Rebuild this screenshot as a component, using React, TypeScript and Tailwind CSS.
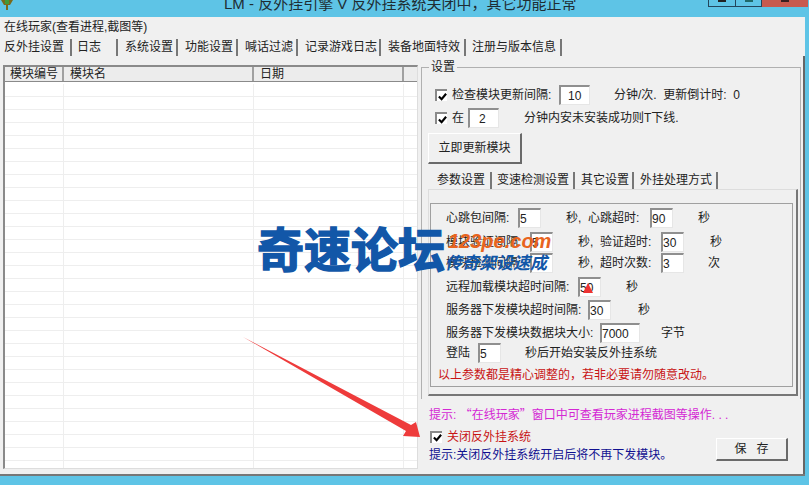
import React from 'react';

const FONT = "font-['Liberation_Sans','Noto_Sans_CJK_SC',sans-serif]";

function Field({ value, width, pl = 'pl-0' }: { value: string; width: string; pl?: string }) {
	return (
		<span className={`inline-block h-[20px] shrink-0 border-t-2 border-l-2 border-t-[#8f8f8f] border-l-[#8f8f8f] border-r border-b border-r-[#e6e6e6] border-b-[#e6e6e6] bg-white text-[12px] leading-[18px] ${width} ${pl}`}>
			{value}
		</span>
	);
}

function Check() {
	return (
		<span className="flex h-[12px] w-[12px] shrink-0 items-center justify-center border-t-2 border-l-2 border-t-[#8a8a8a] border-l-[#8a8a8a] bg-white">
			<svg viewBox="0 0 10 10" className="h-[9px] w-[9px]">
				<path d="M1 5l3 3 5-6" fill="none" stroke="#000" strokeWidth="2.4" />
			</svg>
		</span>
	);
}

function TabLabel({ label, width }: { label: string; width: string }) {
	return (
		<span className={`block h-[17px] shrink-0 border-r-2 border-r-[#777] text-[12px] leading-[17px] whitespace-nowrap text-[#222] ${width}`}>{label}</span>
	);
}

const mainTabs = [
	{ label: '日志', width: 'w-[46px] pl-[5px]' },
	{ label: '系统设置', width: 'w-[60px] pl-[7px]' },
	{ label: '功能设置', width: 'w-[60px] pl-[7px]' },
	{ label: '喊话过滤', width: 'w-[60px] pl-[7px]' },
	{ label: '记录游戏日志', width: 'w-[83px] pl-[7px]' },
	{ label: '装备地面特效', width: 'w-[85px] pl-[7px]' },
	{ label: '注册与版本信息', width: 'w-[96px] pl-[6px]' },
];

const subTabs = [
	{ label: '变速检测设置', width: 'w-[83px] pl-[5px]' },
	{ label: '其它设置', width: 'w-[59px] pl-[6px]' },
	{ label: '外挂处理方式', width: 'w-[84px] pl-[6px]' },
];

export default function App() {
	return (
		<div className={`relative flex h-[485px] w-[809px] flex-col overflow-hidden bg-[#5ec4e6] text-[#222] ${FONT}`}>
			{/* title bar */}
			<div className="flex h-[17px] shrink-0 items-end">
				<svg viewBox="0 0 14 10" className="h-[10px] w-[14px] self-start">
					<path d="M1 0h12l-3 5H8v5H6V5H4z" fill="#7a6a1c" />
					<path d="M5 0h4v4H5z" fill="#3f9a3a" />
				</svg>
				<span className="ml-[210px] h-[17px] overflow-hidden text-[15px] leading-[8px] whitespace-nowrap text-[#1f2d33]">
					LM - 反外挂引擎 V 反外挂系统关闭中，其它功能正常
				</span>
				<div className="mr-px ml-auto flex h-[7px] self-start">
					<span className="flex w-[28px] justify-center border border-t-0 border-[#23465c]">
						<span className="h-[2px] w-[8px] bg-[#222]" />
					</span>
					<span className="flex w-[26px] justify-center border-r border-b border-[#23465c]">
						<span className="h-[2px] w-[8px] bg-[#1f6a6a]" />
					</span>
					<span className="flex w-[46px] justify-center bg-[#c75a4e]">
						<span className="h-[2px] w-[8px] bg-[#3a2020]" />
					</span>
				</div>
			</div>
			{/* window client */}
			<div className="mr-[4px] flex h-[459px] shrink-0 flex-col border-b-2 border-b-[#777] bg-[#f0f0f0]">
				<div className="h-[20px] shrink-0 pt-[2px] pl-[4px] text-[12px] leading-[17px]">在线玩家(查看进程,截图等)</div>
				<div className="flex h-[19px] shrink-0 items-start pt-[2px] pl-[3px]">
					<TabLabel label="反外挂设置" width="w-[69px] pl-px" />
					{mainTabs.map((tab) => (
						<TabLabel key={tab.label} label={tab.label} width={tab.width} />
					))}
				</div>
				<div className="flex min-h-0 flex-1 pl-[3px]">
					{/* module list */}
					<div className="pt-[9px]">
						<div className="flex h-[404px] w-[415px] flex-col border-t-2 border-r border-b border-l-2 border-t-[#8a8a8a] border-r-[#dddddd] border-b-[#dddddd] border-l-[#8a8a8a] bg-white">
							<div className="flex h-[15px] shrink-0 border-b border-[#8a8a8a] bg-[#ececec] text-[12px] leading-[14px]">
								<span className="w-[59px] border-r-2 border-r-[#a0a0a0] pl-[5px]">模块编号</span>
								<span className="w-[190px] border-r-2 border-r-[#a0a0a0] pl-[6px]">模块名</span>
								<span className="w-[150px] border-r-2 border-r-[#a0a0a0] pl-[6px]">日期</span>
							</div>
							<div className="min-h-0 flex-1 pt-[2px]">
								<div className="flex h-full bg-[repeating-linear-gradient(to_bottom,#ffffff_0,#ffffff_12px,#eeeeee_12px,#eeeeee_13px)]">
									<span className="w-[59px] border-r border-r-[#eeeeee]" />
									<span className="w-[190px] border-r border-r-[#eeeeee]" />
									<span className="w-[150px] border-r border-r-[#eeeeee]" />
								</div>
							</div>
						</div>
					</div>
					{/* right pane */}
					<div className="ml-[2px] flex w-[385px] shrink-0 flex-col border-r-2 border-r-[#666] pt-[11px] pl-px">
						<div className="relative flex h-[332px] w-[380px] shrink-0 flex-col border-t border-r border-l border-[#b0b0b0] pt-[17px] pl-[13px]">
							<span className="absolute -top-[8px] left-[7px] bg-[#f0f0f0] px-[2px] text-[12px] leading-[14px]">设置</span>
							<div className="flex h-[20px] items-center text-[12px]">
								<Check />
								<span className="ml-[5px] w-[107px]">检查模块更新间隔:</span>
								<Field value="10" width="w-[31px]" pl="pl-[7px]" />
								<span className="ml-[24px] whitespace-pre">分钟/次.  更新倒计时:  0</span>
							</div>
							<div className="mt-[3px] flex h-[20px] items-center text-[12px]">
								<Check />
								<span className="ml-[5px] w-[16px]">在</span>
								<Field value="2" width="w-[31px]" pl="pl-[9px]" />
								<span className="ml-[25px]">分钟内安未安装成功则T下线.</span>
							</div>
							<button className="mt-[5px] -ml-[7px] h-[31px] w-[94px] shrink-0 border-t border-r-2 border-b-2 border-l border-t-white border-r-[#6a6a6a] border-b-[#6a6a6a] border-l-white bg-[#f0f0f0] text-[12px]">
								立即更新模块
							</button>
							<div className="mt-[8px] -ml-[2px] flex h-[17px] shrink-0 items-start">
								<TabLabel label="参数设置" width="w-[59px] pl-[4px]" />
								{subTabs.map((tab) => (
									<TabLabel key={tab.label} label={tab.label} width={tab.width} />
								))}
							</div>
							{/* tab page */}
							<div className="-ml-[7px] flex h-[207px] w-[370px] shrink-0 flex-col border-t border-r-2 border-b-2 border-l border-t-[#dddddd] border-r-[#777] border-b-[#777] border-l-[#dddddd] pt-[13px] pl-px">
								<div className="flex h-[184px] w-[363px] flex-col border border-[#a0a0a0] pt-[4px] pl-[15px] text-[12px]">
									<div className="flex h-[20px] shrink-0 items-center">
										<span className="w-[72px]">心跳包间隔:</span>
										<Field value="5" width="w-[23px]" />
										<span className="ml-[25px] w-[22px]">秒,</span>
										<span className="w-[62px]">心跳超时:</span>
										<Field value="90" width="w-[23px]" />
										<span className="ml-[25px]">秒</span>
									</div>
									<div className="mt-[4px] flex h-[20px] shrink-0 items-center">
										<span className="w-[84px]">模块验证间隔:</span>
										<Field value="5" width="w-[23px]" />
										<span className="ml-[25px] w-[22px]">秒,</span>
										<span className="w-[61px]">验证超时:</span>
										<Field value="30" width="w-[23px]" />
										<span className="ml-[26px]">秒</span>
									</div>
									<div className="mt-px flex h-[20px] shrink-0 items-center">
										<span className="w-[84px]">模块检测间隔:</span>
										<Field value="" width="w-[23px]" />
										<span className="ml-[25px] w-[22px]">秒,</span>
										<span className="w-[61px]">超时次数:</span>
										<Field value="3" width="w-[23px]" />
										<span className="ml-[24px]">次</span>
									</div>
									<div className="mt-[4px] flex h-[20px] shrink-0 items-center">
										<span className="w-[132px]">远程加载模块超时间隔:</span>
										<Field value="50" width="w-[23px]" />
										<span className="ml-[25px]">秒</span>
									</div>
									<div className="mt-[3px] flex h-[20px] shrink-0 items-center">
										<span className="w-[142px]">服务器下发模块超时间隔:</span>
										<Field value="30" width="w-[23px]" />
										<span className="ml-[27px]">秒</span>
									</div>
									<div className="mt-[3px] flex h-[20px] shrink-0 items-center">
										<span className="w-[154px]">服务器下发模块数据块大小:</span>
										<Field value="7000" width="w-[40px]" />
										<span className="ml-[21px]">字节</span>
									</div>
									<div className="flex h-[20px] shrink-0 items-center">
										<span className="w-[32px]">登陆</span>
										<Field value="5" width="w-[23px]" />
										<span className="ml-[24px]">秒后开始安装反外挂系统</span>
									</div>
									<div className="mt-[4px] -ml-[8px] leading-[16px] text-[#c81414]">以上参数都是精心调整的，若非必要请勿随意改动。</div>
								</div>
							</div>
						</div>
						<div className="mt-[8px] h-[14px] pl-[8px] text-[12px] leading-[14px] whitespace-pre text-[#d428d4]">
							提示: <span className="font-['Noto_Sans_CJK_SC',sans-serif]">“</span>在线玩家<span className="font-['Noto_Sans_CJK_SC',sans-serif]">”</span>窗口中可查看玩家进程截图等操作. . .
						</div>
						<div className="relative mt-[9px] flex h-[13px] items-center pl-[9px] text-[12px] text-[#c81414]">
							<Check />
							<span className="ml-[5px]">关闭反外挂系统</span>
							<button className="absolute top-[8px] right-[15px] h-[23px] w-[72px] border-t border-r-2 border-b-2 border-l border-t-white border-r-[#6a6a6a] border-b-[#6a6a6a] border-l-white bg-[#f0f0f0] text-[12px] text-[#222]">
								保&nbsp;&nbsp;&nbsp;存
							</button>
						</div>
						<div className="mt-[4px] pl-[8px] text-[12px] leading-[16px] text-[#101090]">提示:关闭反外挂系统开启后将不再下发模块。</div>
					</div>
				</div>
			</div>
			{/* pasted-on watermark and annotation arrow */}
			<span className="absolute top-[221px] left-[257px] text-[47px] leading-[60px] font-bold whitespace-nowrap text-[#1257a8] [-webkit-text-stroke:1.5px_#1257a8]">奇速论坛</span>
			<span className="absolute top-[231px] left-[448px] text-[20px] leading-[20px] font-bold whitespace-nowrap text-[#e8641e] italic">123pe.com</span>
			<span className="absolute top-[254px] left-[445px] text-[17px] leading-[20px] font-bold whitespace-nowrap text-[#1257a8] italic">传奇架设速成</span>
			<svg viewBox="0 0 809 485" className="pointer-events-none absolute inset-0 h-[485px] w-[809px]">
				<path d="M243 337L411 425 416 422 420 437 403 436 406 431z" fill="#ee3b3b" />
				<path d="M588 283l5 10h-10z" fill="#e33" />
			</svg>
		</div>
	);
}
